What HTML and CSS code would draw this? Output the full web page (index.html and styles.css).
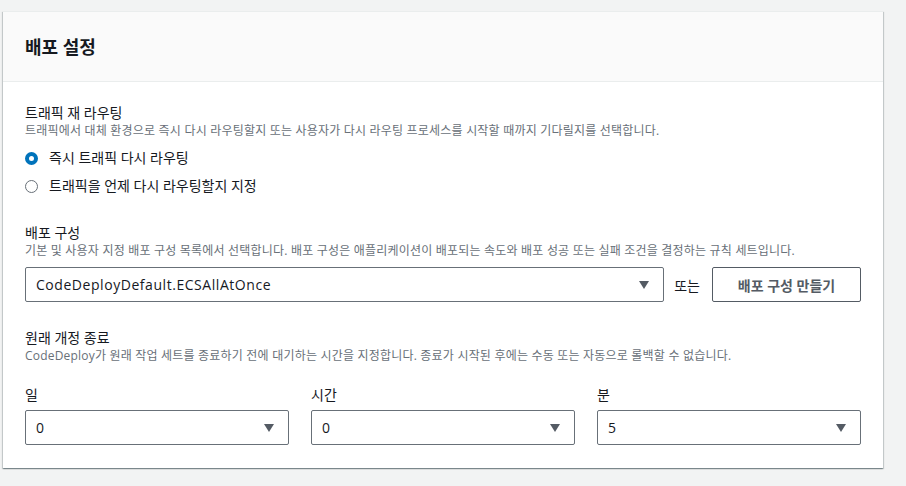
FILE: index.html
```html
<!DOCTYPE html>
<html lang="ko">
<head>
<meta charset="utf-8">
<title>배포 설정</title>
<link rel="stylesheet" href="styles.css">
</head>
<body>
<div class="card">
  <div class="card-header">
    <h2 class="card-title">배포 설정</h2>
  </div>
  <div class="card-body">
    <div class="field field-first">
      <div class="label">트래픽 재 라우팅</div>
      <div class="desc">트래픽에서 대체 환경으로 즉시 다시 라우팅할지 또는 사용자가 다시 라우팅 프로세스를 시작할 때까지 기다릴지를 선택합니다.</div>
      <div class="radios">
        <div class="radio-row"><span class="radio checked"></span><span class="radio-label">즉시 트래픽 다시 라우팅</span></div>
        <div class="radio-row"><span class="radio"></span><span class="radio-label">트래픽을 언제 다시 라우팅할지 지정</span></div>
      </div>
    </div>
    <div class="field">
      <div class="label">배포 구성</div>
      <div class="desc">기본 및 사용자 지정 배포 구성 목록에서 선택합니다. 배포 구성은 애플리케이션이 배포되는 속도와 배포 성공 또는 실패 조건을 결정하는 규칙 세트입니다.</div>
      <div class="config-row">
        <div class="select select-grow"><span class="select-value wide">CodeDeployDefault.ECSAllAtOnce</span><span class="caret"></span></div>
        <span class="or">또는</span>
        <button class="btn">배포 구성 만들기</button>
      </div>
    </div>
    <div class="field field-last">
      <div class="label">원래 개정 종료</div>
      <div class="desc">CodeDeploy가 원래 작업 세트를 종료하기 전에 대기하는 시간을 지정합니다. 종료가 시작된 후에는 수동 또는 자동으로 롤백할 수 없습니다.</div>
      <div class="time-grid">
        <div class="time-col">
          <div class="sublabel">일</div>
          <div class="select"><span class="select-value">0</span><span class="caret"></span></div>
        </div>
        <div class="time-col">
          <div class="sublabel">시간</div>
          <div class="select"><span class="select-value">0</span><span class="caret"></span></div>
        </div>
        <div class="time-col">
          <div class="sublabel">분</div>
          <div class="select"><span class="select-value">5</span><span class="caret"></span></div>
        </div>
      </div>
    </div>
  </div>
</div>
</body>
</html>
```
FILE: styles.css
```css
html, body {
  margin: 0;
  padding: 0;
}
body {
  background: #f2f3f3;
  font-family: "Open Sans", "Noto Sans CJK KR", sans-serif;
  color: #16191f;
  width: 906px;
  height: 486px;
  overflow: hidden;
}
.card {
  margin: 11px 0 0 3px;
  width: 880px;
  background: #ffffff;
  border-top: 1px solid #eaeded;
  box-shadow: 0 1px 1px 0 rgba(0, 28, 36, 0.3), 1px 1px 1px 0 rgba(0, 28, 36, 0.15), -1px 1px 1px 0 rgba(0, 28, 36, 0.15);
}
.card-header {
  height: 69px;
  background: #fafafa;
  border-bottom: 1px solid #eaeded;
  padding: 0 22px;
  display: flex;
  align-items: center;
}
.card-title {
  margin: 0;
  font-size: 18px;
  font-weight: 700;
  line-height: 22px;
  color: #16191f;
}
.card-body {
  padding: 0 22px 23px 22px;
}
.field {
  margin-top: 23px;
}
.field-first {
  margin-top: 21px;
}
.field-last {
  margin-top: 26px;
}
.label {
  font-size: 14px;
  line-height: 20px;
  color: #16191f;
}
.desc {
  font-size: 12px;
  line-height: 16px;
  color: #687078;
  letter-spacing: 0.2px;
}
.radios {
  margin-top: 5px;
}
.radio-row {
  height: 28px;
  display: flex;
  align-items: center;
}
.radio {
  box-sizing: border-box;
  width: 13px;
  height: 13px;
  border-radius: 50%;
  border: 1.5px solid #687078;
  margin-right: 11px;
  flex: none;
}
.radio.checked {
  border: 4px solid #0073bb;
  background: #ffffff;
}
.radio-label {
  font-size: 14px;
  line-height: 20px;
}
.config-row {
  margin-top: 8px;
  display: flex;
  align-items: center;
}
.select {
  box-sizing: border-box;
  height: 35px;
  border: 1px solid #687078;
  border-radius: 2px;
  background: #ffffff;
  display: flex;
  align-items: center;
  padding: 0 12px 0 10px;
}
.select-grow {
  flex: 1;
}
.select-value {
  flex: 1;
  font-size: 14px;
  color: #16191f;
}
.select-value.wide {
  letter-spacing: 0.55px;
}
.caret {
  width: 0;
  height: 0;
  border-left: 5.5px solid transparent;
  border-right: 5.5px solid transparent;
  border-top: 8px solid #545b64;
  margin-right: 2px;
}
.or {
  font-size: 14px;
  margin: 0 12px 0 10px;
  color: #16191f;
}
.btn {
  box-sizing: border-box;
  width: 149px;
  height: 35px;
  border: 1px solid #545b64;
  border-radius: 2px;
  background: #ffffff;
  font-family: "Open Sans", "Noto Sans CJK KR", sans-serif;
  font-size: 14px;
  font-weight: 700;
  color: #545b64;
  padding: 0;
}
.time-grid {
  margin-top: 21px;
  display: grid;
  grid-template-columns: 1fr 1fr 1fr;
  column-gap: 22px;
}
.sublabel {
  font-size: 14px;
  line-height: 20px;
  margin-bottom: 5px;
}
```
